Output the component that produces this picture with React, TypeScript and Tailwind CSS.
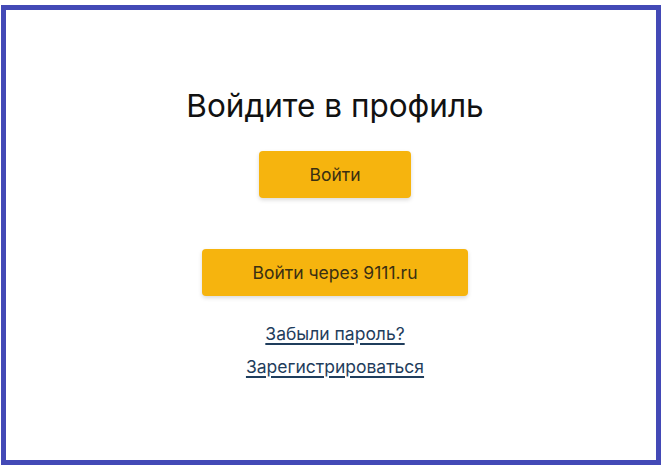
export default function App() {
  return (
    <div className="w-[665px] h-[469px] bg-white pl-px pt-[5px] pr-[4px] pb-[4px] font-['Inter','Noto_Sans',sans-serif]">
      <div className="w-full h-full border-[5px] border-[#4349b6] bg-white flex flex-col items-center pl-[8px]">
        <h1 className="mt-[77px] text-[31.5px] leading-[38px] text-[#111111] font-normal">Войдите в профиль</h1>
        <button className="mt-[26px] w-[152px] h-[47px] pt-[2px] rounded-[4px] bg-[#f6b40e] shadow-[0_2px_4px_rgba(0,0,0,0.15)] text-[17.5px] text-[#3a2f12]">
          Войти
        </button>
        <button className="mt-[51px] w-[266px] h-[47px] pt-[2px] rounded-[4px] bg-[#f6b40e] shadow-[0_2px_4px_rgba(0,0,0,0.15)] text-[17.5px] text-[#3a2f12]">
          Войти через 9111.ru
        </button>
        <a href="#" className="mt-[26px] text-[17.5px] leading-[24px] text-[#1f3d5c] underline decoration-[1.5px] underline-offset-[3px]">
          Забыли пароль?
        </a>
        <a href="#" className="mt-[9px] text-[17.5px] leading-[24px] text-[#1f3d5c] underline decoration-[1.5px] underline-offset-[3px]">
          Зарегистрироваться
        </a>
      </div>
    </div>
  );
}
